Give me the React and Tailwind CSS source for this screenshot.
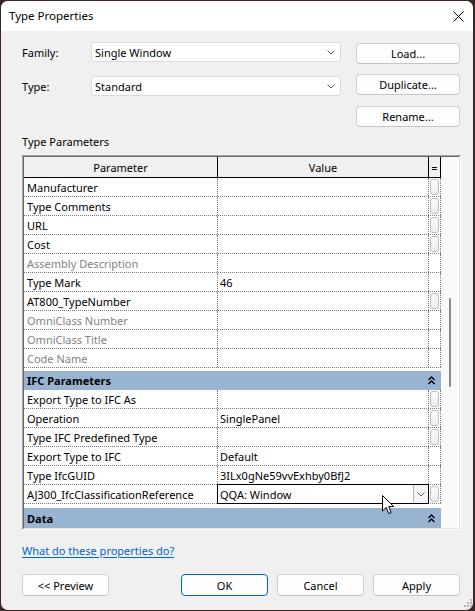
import React from "react";

const rows1 = [
  { p: "Manufacturer", v: "", btn: true },
  { p: "Type Comments", v: "", btn: true },
  { p: "URL", v: "", btn: true },
  { p: "Cost", v: "", btn: true },
  { p: "Assembly Description", v: "", btn: false, grey: true },
  { p: "Type Mark", v: "46", btn: false },
  { p: "AT800_TypeNumber", v: "", btn: true },
  { p: "OmniClass Number", v: "", btn: false, grey: true },
  { p: "OmniClass Title", v: "", btn: false, grey: true },
  { p: "Code Name", v: "", btn: false, grey: true },
];

const rows2 = [
  { p: "Export Type to IFC As", v: "", btn: true },
  { p: "Operation", v: "SinglePanel", btn: true },
  { p: "Type IFC Predefined Type", v: "", btn: true },
  { p: "Export Type to IFC", v: "Default", btn: false },
  { p: "Type IfcGUID", v: "3ILx0gNe59vvExhby0BfJ2", btn: false },
  { p: "AJ300_IfcClassificationReference", v: "QQA: Window", btn: true, editor: true },
];

function Chevron({ className = "" }) {
  return (
    <svg width="8" height="5" viewBox="0 0 8 5" className={className}>
      <polyline points="0.5,0.5 4,4 7.5,0.5" fill="none" stroke="#5f5f5f" strokeWidth="1" />
    </svg>
  );
}

function Collapse() {
  return (
    <svg width="7" height="9" viewBox="0 0 7 9">
      <polyline points="0.5,4 3.5,1 6.5,4" fill="none" stroke="#000" strokeWidth="1.4" />
      <polyline points="0.5,8 3.5,5 6.5,8" fill="none" stroke="#000" strokeWidth="1.4" />
    </svg>
  );
}

function Row({ r }) {
  return (
    <div className="flex h-[19px] border-b border-dotted border-[#7a7a7a]">
      <div
        className={`w-[194px] shrink-0 border-r border-dotted border-[#7a7a7a] pl-[3px] flex items-center whitespace-nowrap overflow-hidden ${
          r.grey ? "text-[#838383]" : "text-black"
        }`}
      >
        {r.p}
      </div>
      <div className="relative w-[211px] shrink-0 border-r border-dotted border-[#7a7a7a] pl-[2px] flex items-center whitespace-nowrap">
        {r.editor ? (
          <div className="absolute left-[-1px] top-[-1px] right-[-1px] bottom-[-1px] z-10 flex border border-black bg-white">
            <div className="flex-1 flex items-center pl-[2px]">{r.v}</div>
            <div className="w-[15px] flex items-center justify-center border-l border-[#b4b4b4] bg-[#f4f4f4]">
              <Chevron />
            </div>
          </div>
        ) : (
          r.v
        )}
      </div>
      <div className="w-[12px] shrink-0 border-r border-dotted border-[#7a7a7a] flex items-center justify-center">
        {r.btn && (
          <div className="w-[9px] h-[16px] rounded-[3px] border border-[#bdbdbd] bg-gradient-to-b from-[#fbfbfb] to-[#ececec]" />
        )}
      </div>
    </div>
  );
}

function Band({ label, h = "h-[19px]" }) {
  return (
    <div className={`flex ${h} shrink-0 items-center justify-between bg-[#99b4d1] pl-[3px] pr-[6px] font-bold`}>
      <span>{label}</span>
      <Collapse />
    </div>
  );
}

function Btn({ children, w = "w-[104px]", h = "h-[21px]", primary = false }) {
  return (
    <div
      className={`${w} ${h} flex items-center justify-center rounded-[4px] border ${
        primary ? "border-[#0067c0]" : "border-[#d0d0d0] border-b-[#c4c4c4]"
      } bg-[#fdfdfd] text-black`}
    >
      {children}
    </div>
  );
}

export default function App() {
  return (
    <div className="w-[475px] h-[611px] bg-[#3a2626] pt-[1px] pl-[1px] font-[family-name:'Noto_Sans',sans-serif] text-[11px] leading-none text-black">
      <div className="relative w-[472px] h-[609px] rounded-[7px] overflow-hidden bg-[#f0f0f0] flex flex-col">
        {/* title bar */}
        <div className="h-[30px] shrink-0 bg-white flex items-center justify-between pl-[8px] pr-[9px]">
          <span className="text-[11.5px]">Type Properties</span>
          <svg width="11" height="11" viewBox="0 0 11 11">
            <line x1="0.5" y1="0.5" x2="10.5" y2="10.5" stroke="#000" strokeWidth="1" />
            <line x1="10.5" y1="0.5" x2="0.5" y2="10.5" stroke="#000" strokeWidth="1" />
          </svg>
        </div>

        {/* top area */}
        <div className="flex pl-[21px]">
          <div className="flex flex-col mt-[11px] gap-[14px]">
            <div className="flex items-center h-[20px]">
              <span className="w-[69px]">Family:</span>
              <div className="w-[250px] h-[20px] flex items-center justify-between bg-white border border-[#dadada] rounded-[3px] pl-[3px] pr-[5px]">
                <span>Single Window</span>
                <Chevron />
              </div>
            </div>
            <div className="flex items-center h-[20px]">
              <span className="w-[69px]">Type:</span>
              <div className="w-[250px] h-[20px] flex items-center justify-between bg-white border border-[#dadada] rounded-[3px] pl-[3px] pr-[5px]">
                <span>Standard</span>
                <Chevron />
              </div>
            </div>
          </div>
          <div className="flex flex-col ml-[15px] mt-[12px]">
            <Btn>Load...</Btn>
            <div className="mt-[10px]">
              <Btn>Duplicate...</Btn>
            </div>
            <div className="mt-[11px]">
              <Btn>Rename...</Btn>
            </div>
          </div>
        </div>

        <div className="pl-[21px] mt-[8px] h-[13px] flex items-center">Type Parameters</div>

        {/* table */}
        <div className="ml-[21px] mt-[7px] w-[439px] h-[375px] border-l border-t border-[#a0a0a0] border-r-white border-b-white border-r border-b">
          <div className="w-full h-full border-l border-t border-[#696969] border-r-[#e3e3e3] border-b-[#e3e3e3] border-r border-b flex">
            <div className="w-[417px] h-full bg-white overflow-hidden flex flex-col">
              {/* header */}
              <div className="flex h-[21px] shrink-0 bg-[#f0f0f0] border-b border-black">
                <div className="w-[194px] border-r border-black flex items-center justify-center">Parameter</div>
                <div className="w-[211px] border-r border-black flex items-center justify-center">Value</div>
                <div className="w-[12px] border-r border-black flex items-center justify-center">=</div>
              </div>
              {rows1.map((r) => (
                <Row key={r.p} r={r} />
              ))}
              <div className="h-[3px] shrink-0" />
              <Band label="IFC Parameters" />
              {rows2.map((r) => (
                <Row key={r.p} r={r} />
              ))}
              <div className="h-[4px] shrink-0" />
              <Band label="Data" h="h-[20px]" />
            </div>
            {/* scrollbar */}
            <div className="flex-1 bg-[#f9f9f9] flex flex-col items-center">
              <div className="mt-[141px] h-[89px] w-[2px] rounded-full bg-[#8a8a8a]" />
            </div>
          </div>
        </div>

        <div className="pl-[21px] mt-[14px] h-[13px] flex items-center">
          <span className="text-[#0066cc] underline underline-offset-2">What do these properties do?</span>
        </div>

        <div className="flex pl-[21px] mt-[17px]">
          <Btn w="w-[87px]" h="h-[22px]">&lt;&lt; Preview</Btn>
          <div className="ml-[72px] flex gap-[9px]">
            <Btn w="w-[87px]" h="h-[22px]" primary>
              OK
            </Btn>
            <Btn w="w-[87px]" h="h-[22px]">Cancel</Btn>
            <Btn w="w-[87px]" h="h-[22px]">Apply</Btn>
          </div>
        </div>

        {/* size grip */}
        <svg className="absolute right-[1px] bottom-[1px]" width="10" height="10" viewBox="0 0 10 10">
          <rect x="8" y="0" width="2" height="2" fill="#b5b5b5" />
          <rect x="5" y="3" width="2" height="2" fill="#b5b5b5" />
          <rect x="8" y="3" width="2" height="2" fill="#b5b5b5" />
          <rect x="2" y="6" width="2" height="2" fill="#b5b5b5" />
          <rect x="5" y="6" width="2" height="2" fill="#b5b5b5" />
          <rect x="8" y="6" width="2" height="2" fill="#b5b5b5" />
        </svg>

        {/* mouse cursor */}
        <svg className="absolute left-[381px] top-[494px] z-20" width="13" height="20" viewBox="0 0 13 20">
          <path
            d="M0.5 0.5 L0.5 16 L4.2 12.4 L6.8 18.6 L9.2 17.6 L6.7 11.6 L11.8 11.6 Z"
            fill="#fff"
            stroke="#000"
            strokeWidth="1"
            strokeLinejoin="miter"
          />
        </svg>
      </div>
    </div>
  );
}
